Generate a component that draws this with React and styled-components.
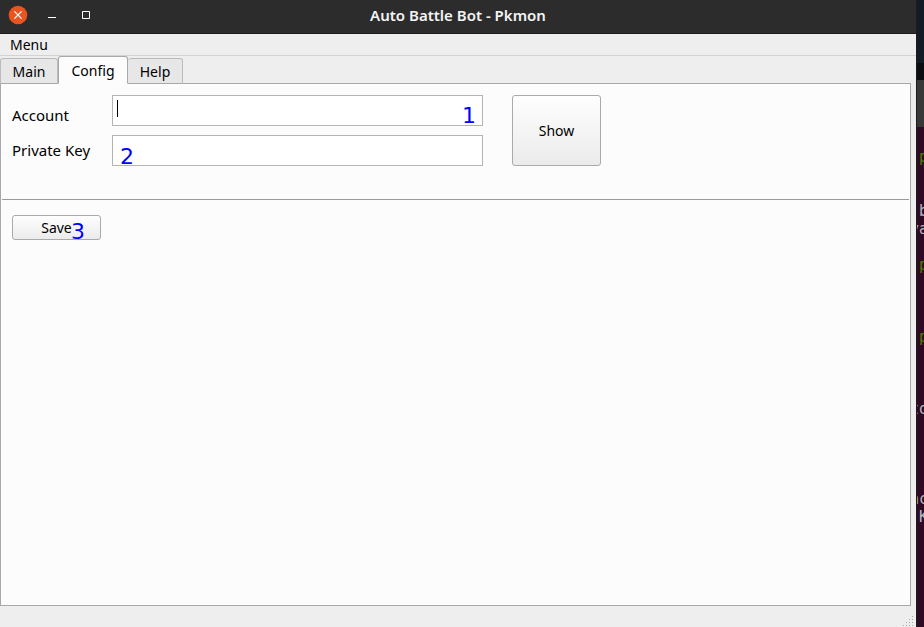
import React, { useState } from "react";
import styled, { createGlobalStyle } from "styled-components";

const GlobalStyle = createGlobalStyle`
  * { box-sizing: border-box; }
  body {
    margin: 0;
    background: #300a24;
    color: #000;
    font-family: "Noto Sans", "Open Sans", sans-serif;
    font-size: 14px;
    line-height: 20px;
  }
  button, input { font: inherit; color: inherit; }
`;

const Desktop = styled.div`
  display: flex;
  min-height: 100vh;
  overflow: hidden;
`;

const Window = styled.main`
  flex: 1;
  min-width: 0;
  display: flex;
  flex-direction: column;
  background: #eee;
`;

const TitleBar = styled.header`
  display: grid;
  grid-template-columns: 1fr auto 1fr;
  align-items: center;
  height: 34px;
  padding: 0 8px 3px;
  background: #2c2c2c;
  border-bottom: 1px solid #1e1a1d;
  color: #f4f4f4;
`;

const WindowControls = styled.div`
  display: flex;
  gap: 14px;
`;

const ControlButton = styled.button`
  display: block;
  width: 20px;
  height: 20px;
  padding: 0;
  border: 0;
  background: none;

  svg { display: block; }
`;

const Title = styled.h1`
  margin: 0;
  font-size: 15px;
  font-weight: 600;
  line-height: 20px;
`;

const MenuBar = styled.nav`
  display: flex;
  height: 22px;
  padding: 0 4px;
  border-bottom: 1px solid #d3d3d3;
`;

const MenuItem = styled.button`
  padding: 0 6px;
  border: 0;
  background: none;
  line-height: 20px;
`;

const TabList = styled.div`
  display: flex;
  align-items: flex-end;
  height: 28px;
  margin-bottom: -1px;
  z-index: 1;
`;

const Tab = styled.button`
  height: ${(p) => (p.$active ? 28 : 26)}px;
  width: ${(p) => p.$width}px;
  padding: 2px 0 0;
  border: 1px solid ${(p) => (p.$active ? "#a8a8a8" : "#bbb")};
  border-bottom-color: ${(p) => (p.$active ? "#fcfcfc" : "#a8a8a8")};
  border-left-width: ${(p) => (p.$joined ? 0 : 1)}px;
  border-radius: 3px 3px 0 0;
  background: ${(p) => (p.$active ? "#fcfcfc" : "#e7e7e7")};
`;

const Panel = styled.section`
  flex: 1;
  margin-right: 5px;
  padding: 11px 1px;
  border: 1px solid #a8a8a8;
  background: #fcfcfc;
`;

const Fields = styled.form`
  display: grid;
  grid-template-columns: 100px 371px auto;
  justify-content: start;
  align-items: start;
  padding: 0 10px 31px;
`;

const Labels = styled.div`
  display: flex;
  flex-direction: column;
  padding-top: 3px;
`;

const Label = styled.label`
  font-size: 15px;
  line-height: 35px;
`;

const Inputs = styled.div`
  display: grid;
  gap: 9px;
`;

const Field = styled.div`
  position: relative;
`;

const TextInput = styled.input`
  display: block;
  width: 100%;
  height: 31px;
  padding: 0 4px;
  border: 1px solid #b4b4b4;
  border-radius: 0;
  background: #fff;
  outline: 0;
`;

const Caret = styled.span`
  position: absolute;
  left: 5px;
  top: 5px;
  width: 1px;
  height: 17px;
  background: #000;
`;

const Mark = styled.span`
  position: absolute;
  left: ${(p) => p.$left};
  right: ${(p) => p.$right};
  top: ${(p) => p.$top}px;
  color: #00f;
  font-family: "DejaVu Sans", sans-serif;
  font-size: 22px;
  line-height: 26px;
  pointer-events: none;
`;

const PushButton = styled.button`
  width: 89px;
  height: ${(p) => p.$height}px;
  padding: 0;
  border: 1px solid #aaa;
  border-radius: 3px;
  background: linear-gradient(#fefefe, #ebebeb);
`;

const ShowButton = styled(PushButton)`
  margin-left: 29px;
`;

const Divider = styled.hr`
  height: 1px;
  margin: 0;
  border: 0;
  background: #999;
`;

const Actions = styled.div`
  display: flex;
  padding: 15px 10px;
`;

const StatusBar = styled.footer`
  display: flex;
  justify-content: flex-end;
  align-items: flex-end;
  height: 21px;
  padding: 0 2px;
`;

const Backdrop = styled.aside`
  flex: none;
  width: 8px;
  overflow: hidden;
  border-left: 1px solid #1c1c1c;
  background: #300a24;
`;

const DarkPane = styled.div`
  height: ${(p) => p.$height}px;
  background: ${(p) => p.$color};
`;

const Terminal = styled.pre`
  margin: 0;
  padding-top: 21px;
  margin-left: -7px;
  color: #b4b8c0;
  font-family: "DejaVu Sans Mono", "Liberation Mono", monospace;
  font-size: 15px;
  line-height: 18px;
`;

const TerminalLine = styled.div`
  height: 18px;
  color: ${(p) => (p.$prompt ? "#4e7a06" : "inherit")};
`;

const terminalLines = [
  " p", "", "", " b", "va", "", " p", "", "", "", " p", "",
  "", "", "to", "", "", "", "", "nc", " K",
];

const gripDots = [
  [9, 0], [6, 3], [9, 3], [3, 6], [6, 6], [9, 6], [0, 9], [3, 9], [6, 9], [9, 9],
];

const tabs = [
  { name: "Main", width: 58 },
  { name: "Config", width: 70 },
  { name: "Help", width: 55 },
];

export default function App() {
  const [active, setActive] = useState("Config");

  return (
    <>
      <GlobalStyle />
      <Desktop>
        <Window>
          <TitleBar>
            <WindowControls>
              <ControlButton aria-label="Close">
                <svg width="20" height="20" viewBox="0 0 20 20">
                  <circle cx="10" cy="10" r="9.3" fill="#e95420" />
                  <path d="M6.4 6.4l7.2 7.2M13.6 6.4l-7.2 7.2" stroke="#fff" strokeWidth="1.3" />
                </svg>
              </ControlButton>
              <ControlButton aria-label="Minimize">
                <svg width="20" height="20" viewBox="0 0 20 20">
                  <path d="M6 12.5h8" stroke="#fff" />
                </svg>
              </ControlButton>
              <ControlButton aria-label="Maximize">
                <svg width="20" height="20" viewBox="0 0 20 20">
                  <path d="M6.5 6.5h7v7h-7z" fill="none" stroke="#fff" />
                </svg>
              </ControlButton>
            </WindowControls>
            <Title>Auto Battle Bot - Pkmon</Title>
          </TitleBar>

          <MenuBar>
            <MenuItem>Menu</MenuItem>
          </MenuBar>

          <TabList role="tablist">
            {tabs.map(({ name, width }, i) => (
              <Tab
                key={name}
                role="tab"
                aria-selected={active === name}
                $active={active === name}
                $width={width}
                $joined={i > 1}
                onClick={() => setActive(name)}
              >
                {name}
              </Tab>
            ))}
          </TabList>

          <Panel role="tabpanel">
            <Fields onSubmit={(e) => e.preventDefault()}>
              <Labels>
                <Label htmlFor="account">Account</Label>
                <Label htmlFor="private-key">Private Key</Label>
              </Labels>
              <Inputs>
                <Field>
                  <TextInput id="account" type="text" />
                  <Caret />
                  <Mark $left="auto" $right="7px" $top={8}>1</Mark>
                </Field>
                <Field>
                  <TextInput id="private-key" type="text" />
                  <Mark $left="8px" $right="auto" $top={9}>2</Mark>
                </Field>
              </Inputs>
              <ShowButton type="button" $height={71}>Show</ShowButton>
            </Fields>
            <Divider />
            <Actions>
              <Field>
                <PushButton type="button" $height={25}>Save</PushButton>
                <Mark $left="59px" $right="auto" $top={4}>3</Mark>
              </Field>
            </Actions>
          </Panel>

          <StatusBar>
            <svg width="11" height="11" viewBox="0 0 11 11">
              {gripDots.map(([x, y]) => (
                <rect key={`${x}-${y}`} x={x} y={y} width="1" height="1" fill="#aaa" />
              ))}
            </svg>
          </StatusBar>
        </Window>

        <Backdrop aria-hidden="true">
          <DarkPane $height={63} $color="#151b24" />
          <DarkPane $height={17} $color="#0b0d12" />
          <DarkPane $height={47} $color="#383838" />
          <Terminal>
            {terminalLines.map((text, i) => (
              <TerminalLine key={i} $prompt={text === " p"}>{text}</TerminalLine>
            ))}
          </Terminal>
        </Backdrop>
      </Desktop>
    </>
  );
}
